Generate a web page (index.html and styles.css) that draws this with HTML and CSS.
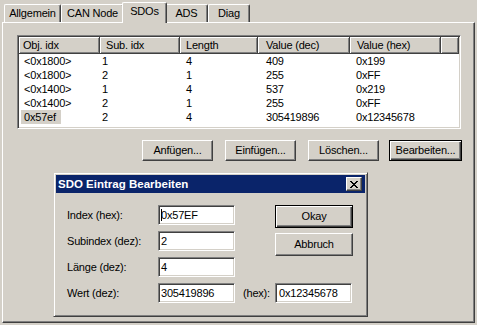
FILE: index.html
```html
<!DOCTYPE html>
<html lang="de">
<head>
<meta charset="utf-8">
<title>SDOs</title>
<link rel="stylesheet" href="styles.css">
</head>
<body>
<div class="window">
  <div class="tabs">
    <div class="tab w-allg">Allgemein</div>
    <div class="tab w-can">CAN Node</div>
    <div class="tab w-sdo active">SDOs</div>
    <div class="tab w-ads">ADS</div>
    <div class="tab w-diag">Diag</div>
  </div>
  <div class="panel">
    <div class="list">
      <div class="head">
        <div class="hc h1">Obj. idx</div>
        <div class="hc h2">Sub. idx</div>
        <div class="hc h3">Length</div>
        <div class="hc h4">Value (dec)</div>
        <div class="hc h5">Value (hex)</div>
        <div class="hc h6"></div>
      </div>
      <div class="row"><div class="c c1">&lt;0x1800&gt;</div><div class="c c2">1</div><div class="c c3">4</div><div class="c c4">409</div><div class="c c5">0x199</div></div>
      <div class="row"><div class="c c1">&lt;0x1800&gt;</div><div class="c c2">2</div><div class="c c3">1</div><div class="c c4">255</div><div class="c c5">0xFF</div></div>
      <div class="row"><div class="c c1">&lt;0x1400&gt;</div><div class="c c2">1</div><div class="c c3">4</div><div class="c c4">537</div><div class="c c5">0x219</div></div>
      <div class="row"><div class="c c1">&lt;0x1400&gt;</div><div class="c c2">2</div><div class="c c3">1</div><div class="c c4">255</div><div class="c c5">0xFF</div></div>
      <div class="row"><div class="c c1"><span class="sel">0x57ef</span></div><div class="c c2">2</div><div class="c c3">4</div><div class="c c4">305419896</div><div class="c c5">0x12345678</div></div>
    </div>
    <div class="btnrow">
      <button class="btn">Anfügen...</button>
      <button class="btn">Einfügen...</button>
      <button class="btn">Löschen...</button>
      <button class="btn default">Bearbeiten...</button>
    </div>
  </div>

  <div class="dialog">
    <div class="titlebar">
      <span class="title">SDO Eintrag Bearbeiten</span>
      <span class="close">
        <svg width="8" height="7" viewBox="0 0 8 7" shape-rendering="crispEdges">
          <g fill="#000">
            <rect x="0" y="0" width="2" height="1"/><rect x="6" y="0" width="2" height="1"/>
            <rect x="1" y="1" width="2" height="1"/><rect x="5" y="1" width="2" height="1"/>
            <rect x="2" y="2" width="4" height="1"/>
            <rect x="3" y="3" width="2" height="1"/>
            <rect x="2" y="4" width="4" height="1"/>
            <rect x="1" y="5" width="2" height="1"/><rect x="5" y="5" width="2" height="1"/>
            <rect x="0" y="6" width="2" height="1"/><rect x="6" y="6" width="2" height="1"/>
          </g>
        </svg>
      </span>
    </div>
    <div class="dlg-body">
      <div class="lbl r1">Index (hex):</div>
      <div class="field r1 f-left"><span class="caret"></span>0x57EF</div>
      <div class="lbl r2">Subindex (dez):</div>
      <div class="field r2 f-left">2</div>
      <div class="lbl r3">Länge (dez):</div>
      <div class="field r3 f-left">4</div>
      <div class="lbl r4">Wert (dez):</div>
      <div class="field r4 f-left">305419896</div>
      <div class="lbl r4 hexlbl">(hex):</div>
      <div class="field r4 f-hex">0x12345678</div>
      <div class="dlg-btns">
        <button class="btn dbtn default">Okay</button>
        <button class="btn dbtn">Abbruch</button>
      </div>
    </div>
  </div>
</div>
</body>
</html>
```
FILE: styles.css
```css
* { box-sizing: border-box; }
html, body { margin: 0; padding: 0; }
body {
  width: 477px;
  height: 325px;
  overflow: hidden;
  background: #d4d0c8;
  font-family: "Liberation Sans", Arial, sans-serif;
  font-size: 11px;
  letter-spacing: -0.2px;
  color: #000;
}
.window {
  position: relative;
  width: 477px;
  height: 325px;
  padding: 0 2px 2px 2px;
  display: flex;
  flex-direction: column;
}

/* Tabs */
.tabs {
  height: 22px;
  display: flex;
  align-items: flex-end;
  padding-left: 2px;
  position: relative;
  z-index: 1;
}
.tab {
  height: 18px;
  padding-top: 2px;
  line-height: 13px;
  text-align: center;
  white-space: nowrap;
  background: #d4d0c8;
  border: 1px solid #fff;
  border-bottom: none;
  border-right-color: #404040;
  box-shadow: inset -1px 0 #808080;
  border-radius: 2px 2px 0 0;
}
.tab.active {
  height: 21px;
  margin: 0 -2px -1px;
  position: relative;
  z-index: 2;
}
.w-allg { width: 57px; }
.w-can { width: 63px; }
.w-sdo { width: 45px; }
.w-ads { width: 43px; }
.w-diag { width: 42px; }

/* Panel */
.panel {
  flex: 1;
  display: flex;
  flex-direction: column;
  border: 1px solid;
  border-color: #fff #404040 #404040 #fff;
  box-shadow: inset -1px -1px #808080;
}

/* List view */
.list {
  margin: 12px 13px 0 14px;
  height: 94px;
  background: #fff;
  border: 1px solid;
  border-color: #808080 #fff #fff #808080;
  box-shadow: inset 1px 1px #404040, inset -1px -1px #d4d0c8;
  padding: 1px;
  overflow: hidden;
}
.head {
  display: flex;
  height: 17px;
}
.hc {
  height: 17px;
  padding-top: 1px;
  line-height: 15px;
  white-space: nowrap;
  overflow: hidden;
  background: #d4d0c8;
  border-right: 1px solid #404040;
  border-bottom: 1px solid #404040;
  box-shadow: inset 1px 1px #fff, inset -1px -1px #808080;
}
.h1 { width: 81px; padding-left: 4px; }
.h2 { width: 80px; padding-left: 6px; }
.h3 { width: 78px; padding-left: 6px; }
.h4 { width: 92px; padding-left: 8px; }
.h5 { width: 91px; padding-left: 7px; }
.h6 { flex: 1; }

.row {
  display: flex;
  height: 14px;
  line-height: 14px;
  padding-left: 5px;
  white-space: nowrap;
}
.c1 { width: 78px; }
.c2 { width: 84px; }
.c3 { width: 80px; }
.c4 { width: 90px; }
.c5 { flex: 1; }
.sel {
  display: inline-block;
  width: 40px;
  margin-left: -3px;
  padding-left: 3px;
  background: #d4d0c8;
}

/* Buttons */
.btnrow {
  display: flex;
  justify-content: flex-end;
  gap: 12px;
  margin: 11px 12px 0 0;
}
.btn {
  width: 71px;
  height: 21px;
  padding: 0;
  margin: 0;
  font: inherit;
  letter-spacing: inherit;
  color: #000;
  line-height: 19px;
  text-align: center;
  background: #d4d0c8;
  border: 1px solid;
  border-color: #fff #404040 #404040 #fff;
  box-shadow: inset -1px -1px #808080;
  border-radius: 0;
}
.btn.default {
  width: 73px;
  margin-left: -2px;
  border: 1px solid #000;
  box-shadow: inset 1px 1px #fff, inset -1px -1px #404040, inset -2px -2px #808080;
}

/* Dialog window (floating over the page) */
.dialog {
  position: absolute;
  left: 53px;
  top: 172px;
  width: 315px;
  height: 145px;
  padding: 2px;
  background: #d4d0c8;
  border: 1px solid;
  border-color: #d4d0c8 #404040 #404040 #d4d0c8;
  box-shadow: inset 1px 1px #fff, inset -1px -1px #808080;
  display: flex;
  flex-direction: column;
  z-index: 5;
}
.titlebar {
  height: 18px;
  background: #0a246a;
  display: flex;
  align-items: center;
  justify-content: space-between;
  padding: 0 3px 0 2px;
}
.title {
  color: #fff;
  font-weight: bold;
  font-size: 11.5px;
  letter-spacing: 0;
  line-height: 18px;
  white-space: nowrap;
}
.close {
  width: 16px;
  height: 14px;
  display: flex;
  align-items: center;
  justify-content: center;
  background: #d4d0c8;
  border: 1px solid;
  border-color: #fff #404040 #404040 #fff;
  box-shadow: inset -1px -1px #808080;
  padding-right: 1px;
}
.close svg { display: block; }

.dlg-body {
  padding: 12px 0 0 11px;
  display: grid;
  grid-template-columns: 91px 77px 40px 78px;
  grid-template-rows: 20px 20px 20px 20px;
  row-gap: 6px;
}
.lbl {
  grid-column: 1;
  display: flex;
  align-items: center;
  line-height: 13px;
  white-space: nowrap;
}
.hexlbl { grid-column: 3; padding-left: 8px; }
.r1 { grid-row: 1; }
.r2 { grid-row: 2; }
.r3 { grid-row: 3; }
.r4 { grid-row: 4; }
.field {
  height: 20px;
  background: #fff;
  border: 1px solid;
  border-color: #808080 #fff #fff #808080;
  box-shadow: inset 1px 1px #404040, inset -1px -1px #d4d0c8;
  line-height: 18px;
  white-space: nowrap;
  display: flex;
  align-items: center;
}
.f-left { grid-column: 2; padding-left: 2px; }
.f-hex { grid-column: 4; width: 77px; padding-left: 3px; }
.caret {
  display: inline-block;
  width: 1px;
  height: 12px;
  background: #000;
  margin-right: -1px;
}
.dlg-btns {
  grid-column: 4;
  grid-row: 1 / span 2;
  display: flex;
  flex-direction: column;
  gap: 5px;
  align-self: start;
}
.dbtn {
  width: 78px;
  height: 23px;
  line-height: 21px;
  margin: 0;
}
.dbtn.default {
  width: 78px;
  margin: 0;
}
```
